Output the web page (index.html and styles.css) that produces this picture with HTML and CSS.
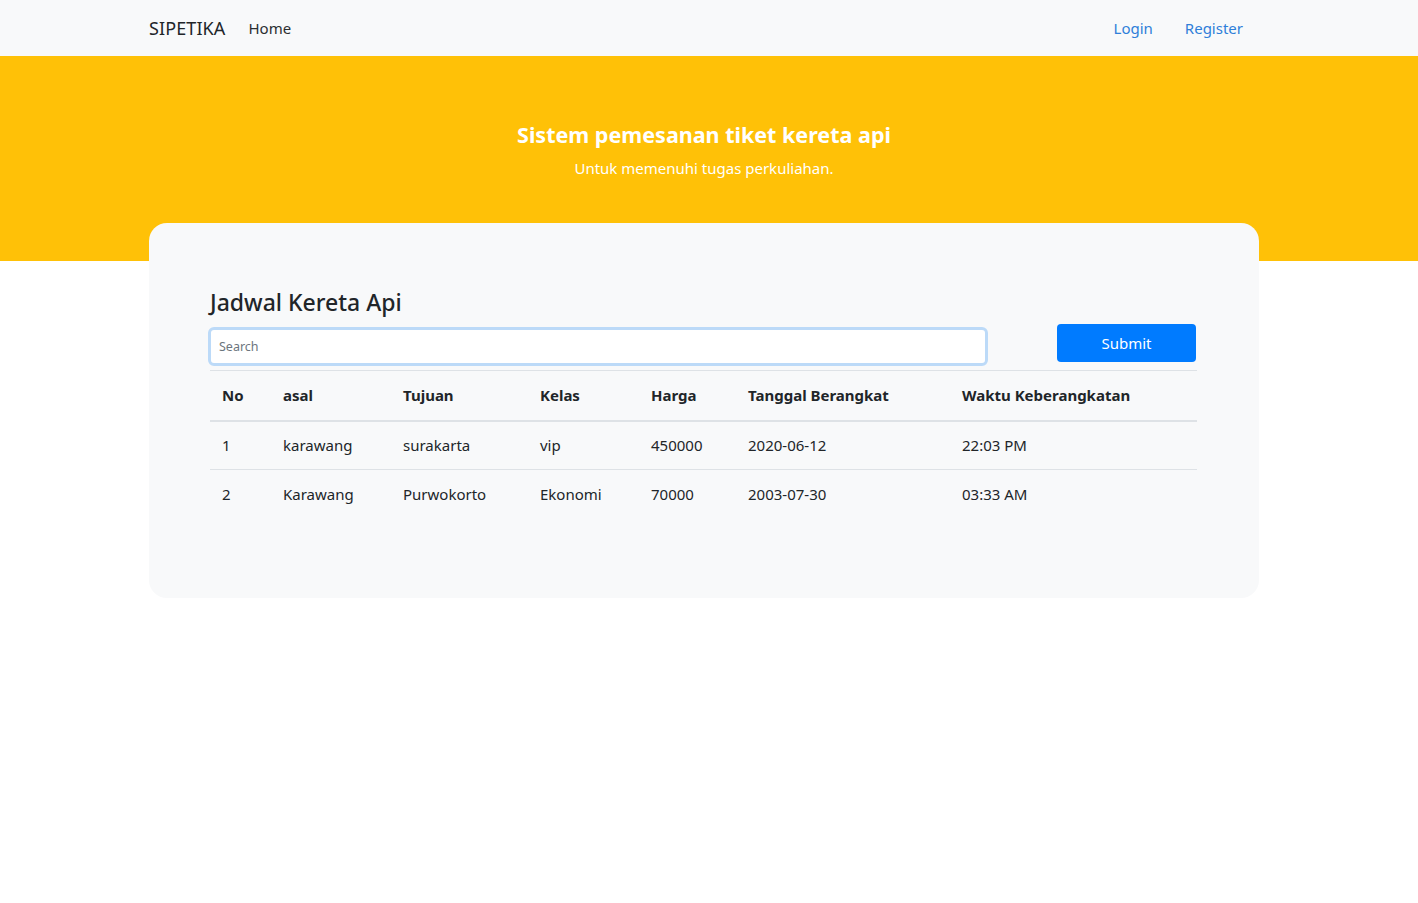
FILE: index.html
```html
<!DOCTYPE html>
<html lang="id">
<head>
<meta charset="utf-8">
<title>SIPETIKA</title>
<link rel="stylesheet" href="styles.css">
</head>
<body>
<nav class="navbar">
  <div class="wrap nav-inner">
    <div class="nav-left">
      <a class="brand" href="#">SIPETIKA</a>
      <a class="nav-link home" href="#">Home</a>
    </div>
    <div class="nav-right">
      <a class="nav-link blue" href="#">Login</a>
      <a class="nav-link blue" href="#">Register</a>
    </div>
  </div>
</nav>
<header class="hero">
  <h1 class="hero-title">Sistem pemesanan tiket kereta api</h1>
  <p class="hero-sub">Untuk memenuhi tugas perkuliahan.</p>
</header>
<main class="wrap">
  <section class="card">
    <h4 class="card-title">Jadwal Kereta Api</h4>
    <form class="search-row">
      <input class="search" type="text" placeholder="Search">
      <button class="btn" type="button">Submit</button>
    </form>
    <table class="table">
      <thead>
        <tr>
          <th class="c1">No</th>
          <th class="c2">asal</th>
          <th class="c3">Tujuan</th>
          <th class="c4">Kelas</th>
          <th class="c5">Harga</th>
          <th class="c6">Tanggal Berangkat</th>
          <th class="c7">Waktu Keberangkatan</th>
        </tr>
      </thead>
      <tbody>
        <tr>
          <td>1</td><td>karawang</td><td>surakarta</td><td>vip</td><td>450000</td><td>2020-06-12</td><td>22:03 PM</td>
        </tr>
        <tr>
          <td>2</td><td>Karawang</td><td>Purwokorto</td><td>Ekonomi</td><td>70000</td><td>2003-07-30</td><td>03:33 AM</td>
        </tr>
      </tbody>
    </table>
  </section>
</main>
</body>
</html>
```
FILE: styles.css
```css
* { box-sizing: border-box; }
body {
  margin: 0;
  font-family: "Noto Sans", "Open Sans", sans-serif;
  color: #212529;
  background: #fff;
  font-size: 15px;
}
a { text-decoration: none; }
.wrap {
  width: 1110px;
  margin-left: calc((100% - 1110px) / 2 - 5px);
}
.navbar {
  background: #f8f9fa;
  height: 56px;
}
.nav-inner {
  height: 56px;
  display: flex;
  align-items: center;
  justify-content: space-between;
}
.nav-left, .nav-right { display: flex; align-items: center; }
.brand {
  font-size: 18px;
  color: #212529;
  margin-right: 23px;
  letter-spacing: 0.1px;
}
.nav-link { font-size: 15px; }
.home { color: #2b2e31; }
.nav-right { padding-right: 16px; }
.blue { color: #2f7fd9; margin-left: 32px; }
.hero {
  background: #ffc107;
  height: 205px;
  text-align: center;
  color: #fff;
  padding: 63px 10px 0 0;
}
.hero-title {
  margin: 0;
  font-size: 21.5px;
  font-weight: 700;
  line-height: 32px;
}
.hero-sub {
  margin: 6px 0 0;
  font-size: 15px;
  line-height: 22px;
}
.card {
  background: #f8f9fa;
  border-radius: 18px;
  margin-top: -38px;
  height: 375px;
  padding: 64px 62px 0 61px;
}
.card-title {
  margin: 0;
  font-size: 23px;
  font-weight: 500;
  line-height: 30px;
}
.search-row {
  display: flex;
  align-items: center;
  justify-content: space-between;
  margin-top: 8px;
  height: 43px;
}
.search {
  width: 780px;
  height: 39px;
  margin-left: -2px;
  border: 3px solid #bcdaf8;
  border-radius: 6px;
  background: #fff;
  padding: 0 8px;
  font-family: inherit;
  font-size: 12.5px;
  color: #495057;
  outline: none;
}
.search::placeholder { color: #6c757d; }
.btn {
  width: 139px;
  height: 38px;
  background: #007bff;
  color: #fff;
  border: 0;
  border-radius: 4px;
  font-family: inherit;
  font-size: 15px;
  margin-top: -8px;
  margin-right: 1px;
}
.table {
  width: 987px;
  border-collapse: collapse;
  margin-top: 2px;
  font-size: 15px;
}
.table th, .table td {
  text-align: left;
  padding: 0 12px;
  height: 49px;
  border-top: 1px solid #dee2e6;
  vertical-align: middle;
}
.table th {
  font-weight: 700;
  border-bottom: 2px solid #dee2e6;
  height: 50px;
}
.c1 { width: 61px; }
.c2 { width: 120px; }
.c3 { width: 137px; }
.c4 { width: 111px; }
.c5 { width: 97px; }
.c6 { width: 214px; }
.c7 { width: 247px; }
```
